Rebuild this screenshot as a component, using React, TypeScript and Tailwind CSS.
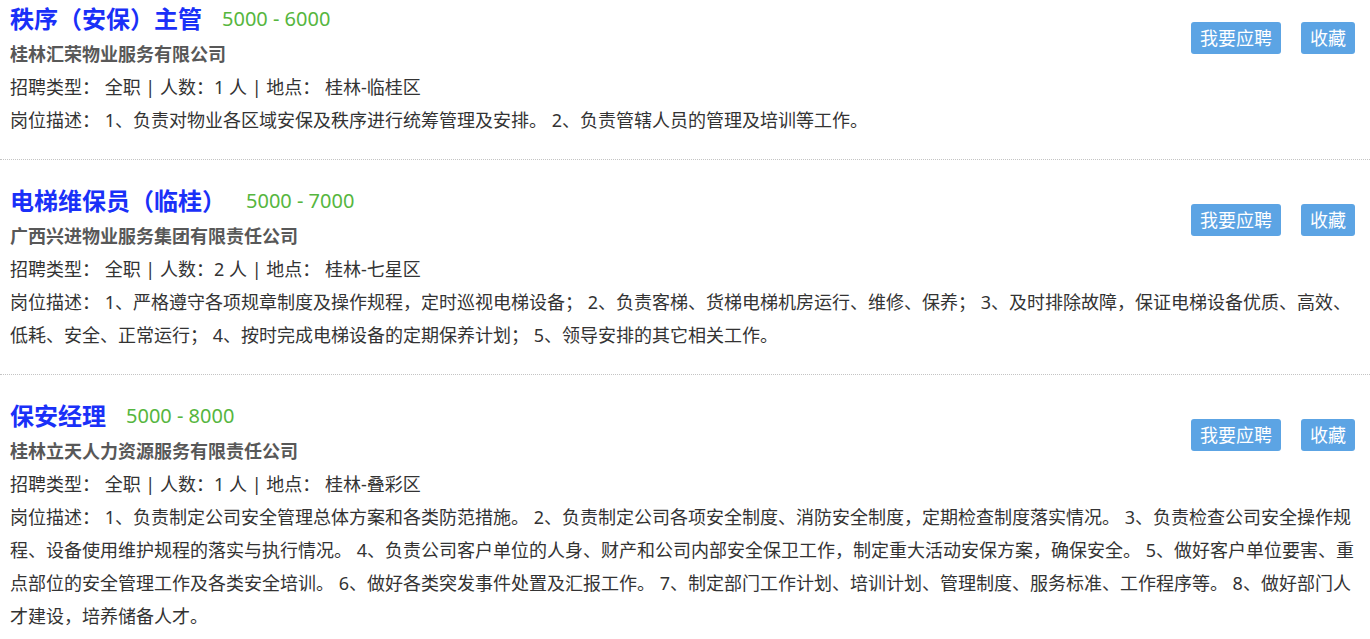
import React from 'react';

interface Job {
  title: string;
  salary: string;
  company: string;
  kind: string;
  count: number;
  place: string;
  desc: string;
}

const jobs: Job[] = [
  {
    title: '秩序（安保）主管',
    salary: '5000 - 6000',
    company: '桂林汇荣物业服务有限公司',
    kind: '全职',
    count: 1,
    place: '桂林-临桂区',
    desc: '1、负责对物业各区域安保及秩序进行统筹管理及安排。 2、负责管辖人员的管理及培训等工作。',
  },
  {
    title: '电梯维保员（临桂）',
    salary: '5000 - 7000',
    company: '广西兴进物业服务集团有限责任公司',
    kind: '全职',
    count: 2,
    place: '桂林-七星区',
    desc: '1、严格遵守各项规章制度及操作规程，定时巡视电梯设备； 2、负责客梯、货梯电梯机房运行、维修、保养； 3、及时排除故障，保证电梯设备优质、高效、低耗、安全、正常运行； 4、按时完成电梯设备的定期保养计划； 5、领导安排的其它相关工作。',
  },
  {
    title: '保安经理',
    salary: '5000 - 8000',
    company: '桂林立天人力资源服务有限责任公司',
    kind: '全职',
    count: 1,
    place: '桂林-叠彩区',
    desc: '1、负责制定公司安全管理总体方案和各类防范措施。 2、负责制定公司各项安全制度、消防安全制度，定期检查制度落实情况。 3、负责检查公司安全操作规程、设备使用维护规程的落实与执行情况。 4、负责公司客户单位的人身、财产和公司内部安全保卫工作，制定重大活动安保方案，确保安全。 5、做好客户单位要害、重点部位的安全管理工作及各类安全培训。 6、做好各类突发事件处置及汇报工作。 7、制定部门工作计划、培训计划、管理制度、服务标准、工作程序等。 8、做好部门人才建设，培养储备人才。',
  },
];

function JobItem({ job }: { job: Job }) {
  return (
    <div className="pl-[10px] pr-[15px] pt-[23px] first:pt-px pb-[22px] border-b border-dotted border-[#c4c4c4]">
      {/* buttons float right, the text runs under them */}
      <div className="float-right mt-[21px] flex gap-[20px]">
        <button className="h-[32px] px-[9px] rounded-[3px] bg-[#5ca4e4] text-white text-[18px] leading-[32px]">
          我要应聘
        </button>
        <button className="h-[32px] px-[9px] rounded-[3px] bg-[#5ca4e4] text-white text-[18px] leading-[32px]">
          收藏
        </button>
      </div>
      <div className="flex items-center h-[36px]">
        <span className="text-[24px] font-bold text-[#1a30f8] leading-[36px]">{job.title}</span>
        <span className="ml-[20px] text-[20px] text-[#56b63e] leading-[36px]">{job.salary}</span>
      </div>
      <div className="text-[18px] font-bold text-[#585858] leading-[34px]">{job.company}</div>
      <div className="text-[18px] text-[#333] leading-[33px]">
        招聘类型： {job.kind} | 人数：{job.count} 人 | 地点： {job.place}
      </div>
      <p className="text-[18px] text-[#333] leading-[33px]">岗位描述： {job.desc}</p>
    </div>
  );
}

export default function App() {
  return (
    <div
      className="h-screen overflow-hidden bg-white"
      style={{ fontFamily: '"Noto Sans", "Noto Sans CJK SC", sans-serif' }}
    >
      {jobs.map((job) => (
        <JobItem key={job.title} job={job} />
      ))}
    </div>
  );
}
